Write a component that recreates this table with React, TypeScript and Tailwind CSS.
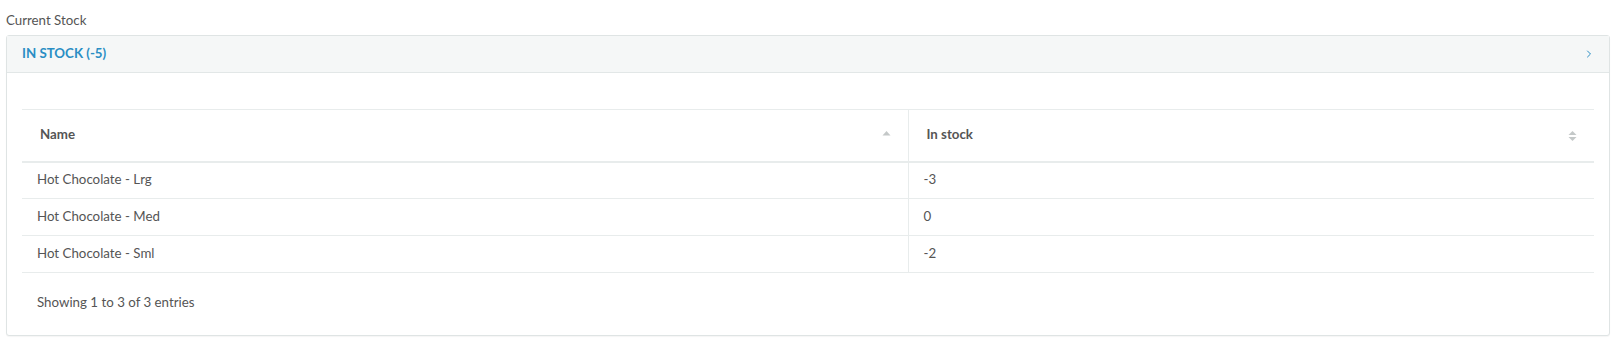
import { ChevronRight } from "lucide-react";

const ROWS = [
  { name: "Hot Chocolate - Lrg", stock: -3 },
  { name: "Hot Chocolate - Med", stock: 0 },
  { name: "Hot Chocolate - Sml", stock: -2 },
];

function SortBoth() {
  return (
    <svg width="9" height="12" viewBox="0 0 9 12" aria-hidden="true">
      <path d="M0.5 5L4.5 1L8.5 5Z" fill="#c4c8c8" />
      <path d="M0.5 7L4.5 11L8.5 7Z" fill="#c4c8c8" />
    </svg>
  );
}

function SortUp() {
  return (
    <svg width="9" height="6" viewBox="0 0 9 6" aria-hidden="true">
      <path d="M0.5 5.5L4.5 1L8.5 5.5Z" fill="#c4c8c8" />
    </svg>
  );
}

export default function App() {
  return (
    <div
      className="min-h-[351px] bg-white px-[6px] pt-[10px] text-[13.3px] text-[#555]"
      style={{ fontFamily: "Lato, 'Open Sans', sans-serif" }}
    >
      <p className="h-[25px] leading-[20px]">Current Stock</p>

      <div className="rounded-[3px] border border-[#dfe4e4] bg-white shadow-[0_1px_1px_rgba(0,0,0,0.04)]">
        {/* Header */}
        <div className="flex h-[37px] items-center justify-between border-b border-[#e2e7e7] bg-[#f5f7f7] pl-[15px] pr-[14px]">
          <span className="font-bold uppercase text-[#2a8ec4]">In stock (-5)</span>
          <ChevronRight size={12} strokeWidth={2} className="text-[#2a8ec4]" />
        </div>

        <div className="px-[15px] pt-[36px]">
          <table className="w-full border-collapse">
            <thead>
              <tr className="h-[52px] border-t border-b-2 border-[#e8ecec]">
                <th className="relative w-[886px] border-r border-[#e8ecec] pl-[18px] text-left font-bold text-[#555]">
                  Name
                  <span className="absolute right-[17px] top-[20px]">
                    <SortUp />
                  </span>
                </th>
                <th className="relative pl-[18px] text-left font-bold text-[#555]">
                  In stock
                  <span className="absolute right-[17px] top-[20px]">
                    <SortBoth />
                  </span>
                </th>
              </tr>
            </thead>
            <tbody>
              {ROWS.map(({ name, stock }) => (
                <tr key={name} className="h-[37px] border-b border-[#e8ecec]">
                  <td className="border-r border-[#e8ecec] pl-[15px]">{name}</td>
                  <td className="pl-[15px]">{stock}</td>
                </tr>
              ))}
            </tbody>
          </table>
          <p className="pb-[22px] pt-[20px] pl-[15px]">Showing 1 to 3 of 3 entries</p>
        </div>
      </div>
    </div>
  );
}
